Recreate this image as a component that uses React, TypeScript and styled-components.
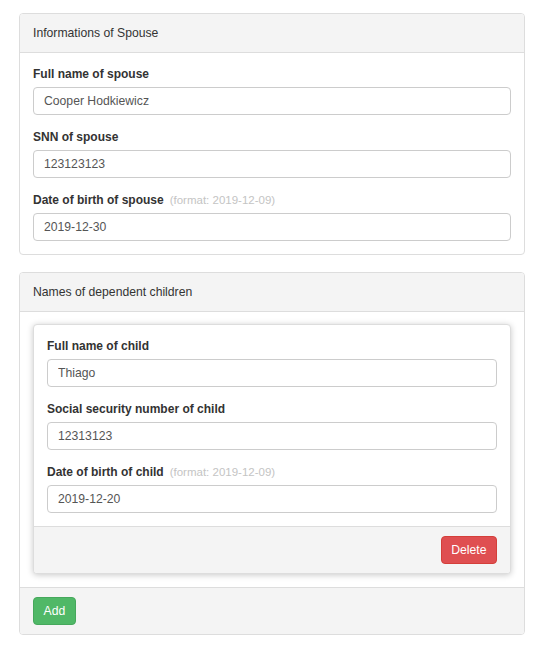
import React, { useState } from "react";
import styled, { createGlobalStyle } from "styled-components";

const GlobalStyle = createGlobalStyle`
  body {
    margin: 0;
    background: #fff;
    font-family: "Liberation Sans", Arial, sans-serif;
    font-size: 12px;
    color: #333;
  }
  * { box-sizing: border-box; }
`;

const Page = styled.div`
  padding: 13px 19px;
  display: flex;
  flex-direction: column;
  gap: 17px;
`;

const Panel = styled.div<{ raised?: boolean }>`
  border: 1px solid #ddd;
  border-radius: 4px;
  background: #fff;
  box-shadow: ${(p) => (p.raised ? "0 1px 6px rgba(0, 0, 0, 0.22)" : "none")};
`;

const PanelHeading = styled.div`
  background: #f4f4f4;
  border-bottom: 1px solid #ddd;
  border-radius: 3px 3px 0 0;
  padding: 0 13px;
  height: 39px;
  display: flex;
  align-items: center;
  font-size: 12.2px;
`;

const PanelBody = styled.div<{ tight?: boolean }>`
  padding: ${(p) => (p.tight ? "12px" : "13px")} 13px 13px;
  display: flex;
  flex-direction: column;
  gap: 14px;
`;

const PanelFooter = styled.div<{ align?: "left" | "right" }>`
  background: #f4f4f4;
  border-top: 1px solid #ddd;
  border-radius: 0 0 3px 3px;
  padding: 9px 13px;
  display: flex;
  justify-content: ${(p) => (p.align === "right" ? "flex-end" : "flex-start")};
`;

const FormGroup = styled.div`
  display: flex;
  flex-direction: column;
  gap: 4px;
`;

const Label = styled.label`
  font-weight: bold;
  line-height: 17px;
  font-size: 12px;
  color: #333;
`;

const Hint = styled.span`
  font-weight: normal;
  color: #c4c4c4;
  font-size: 11.5px;
  margin-left: 6px;
`;

const Input = styled.input`
  height: 28px;
  border: 1px solid #ccc;
  border-radius: 4px;
  padding: 0 10px;
  font-family: inherit;
  font-size: 12.2px;
  color: #555;
  width: 100%;
  outline: none;
`;

const Button = styled.button<{ variant: "danger" | "success" }>`
  height: 28px;
  padding: 0 9.5px;
  border-radius: 4px;
  border: 1px solid ${(p) => (p.variant === "danger" ? "#d43f3a" : "#46a85c")};
  background: ${(p) => (p.variant === "danger" ? "#df4f51" : "#50b867")};
  color: #fff;
  font-family: inherit;
  font-size: 12.2px;
  cursor: pointer;
`;

type Child = { name: string; ssn: string; dob: string };

const Field = ({
  label,
  hint,
  value,
  onChange,
}: {
  label: string;
  hint?: string;
  value: string;
  onChange: (v: string) => void;
}) => (
  <FormGroup>
    <Label>
      {label}
      {hint && <Hint>{hint}</Hint>}
    </Label>
    <Input value={value} onChange={(e) => onChange(e.target.value)} />
  </FormGroup>
);

export default function App() {
  const [spouse, setSpouse] = useState({
    name: "Cooper Hodkiewicz",
    ssn: "123123123",
    dob: "2019-12-30",
  });
  const [children, setChildren] = useState<Child[]>([
    { name: "Thiago", ssn: "12313123", dob: "2019-12-20" },
  ]);

  const setChild = (i: number, key: keyof Child, v: string) =>
    setChildren(children.map((c, j) => (j === i ? { ...c, [key]: v } : c)));

  return (
    <Page>
      <GlobalStyle />
      <Panel>
        <PanelHeading>Informations of Spouse</PanelHeading>
        <PanelBody>
          <Field
            label="Full name of spouse"
            value={spouse.name}
            onChange={(v) => setSpouse({ ...spouse, name: v })}
          />
          <Field
            label="SNN of spouse"
            value={spouse.ssn}
            onChange={(v) => setSpouse({ ...spouse, ssn: v })}
          />
          <Field
            label="Date of birth of spouse"
            hint="(format: 2019-12-09)"
            value={spouse.dob}
            onChange={(v) => setSpouse({ ...spouse, dob: v })}
          />
        </PanelBody>
      </Panel>

      <Panel>
        <PanelHeading>Names of dependent children</PanelHeading>
        <PanelBody tight>
          {children.map((c, i) => (
            <Panel raised key={i}>
              <PanelBody>
                <Field
                  label="Full name of child"
                  value={c.name}
                  onChange={(v) => setChild(i, "name", v)}
                />
                <Field
                  label="Social security number of child"
                  value={c.ssn}
                  onChange={(v) => setChild(i, "ssn", v)}
                />
                <Field
                  label="Date of birth of child"
                  hint="(format: 2019-12-09)"
                  value={c.dob}
                  onChange={(v) => setChild(i, "dob", v)}
                />
              </PanelBody>
              <PanelFooter align="right">
                <Button
                  variant="danger"
                  onClick={() => setChildren(children.filter((_, j) => j !== i))}
                >
                  Delete
                </Button>
              </PanelFooter>
            </Panel>
          ))}
        </PanelBody>
        <PanelFooter>
          <Button
            variant="success"
            onClick={() => setChildren([...children, { name: "", ssn: "", dob: "" }])}
          >
            Add
          </Button>
        </PanelFooter>
      </Panel>
    </Page>
  );
}
